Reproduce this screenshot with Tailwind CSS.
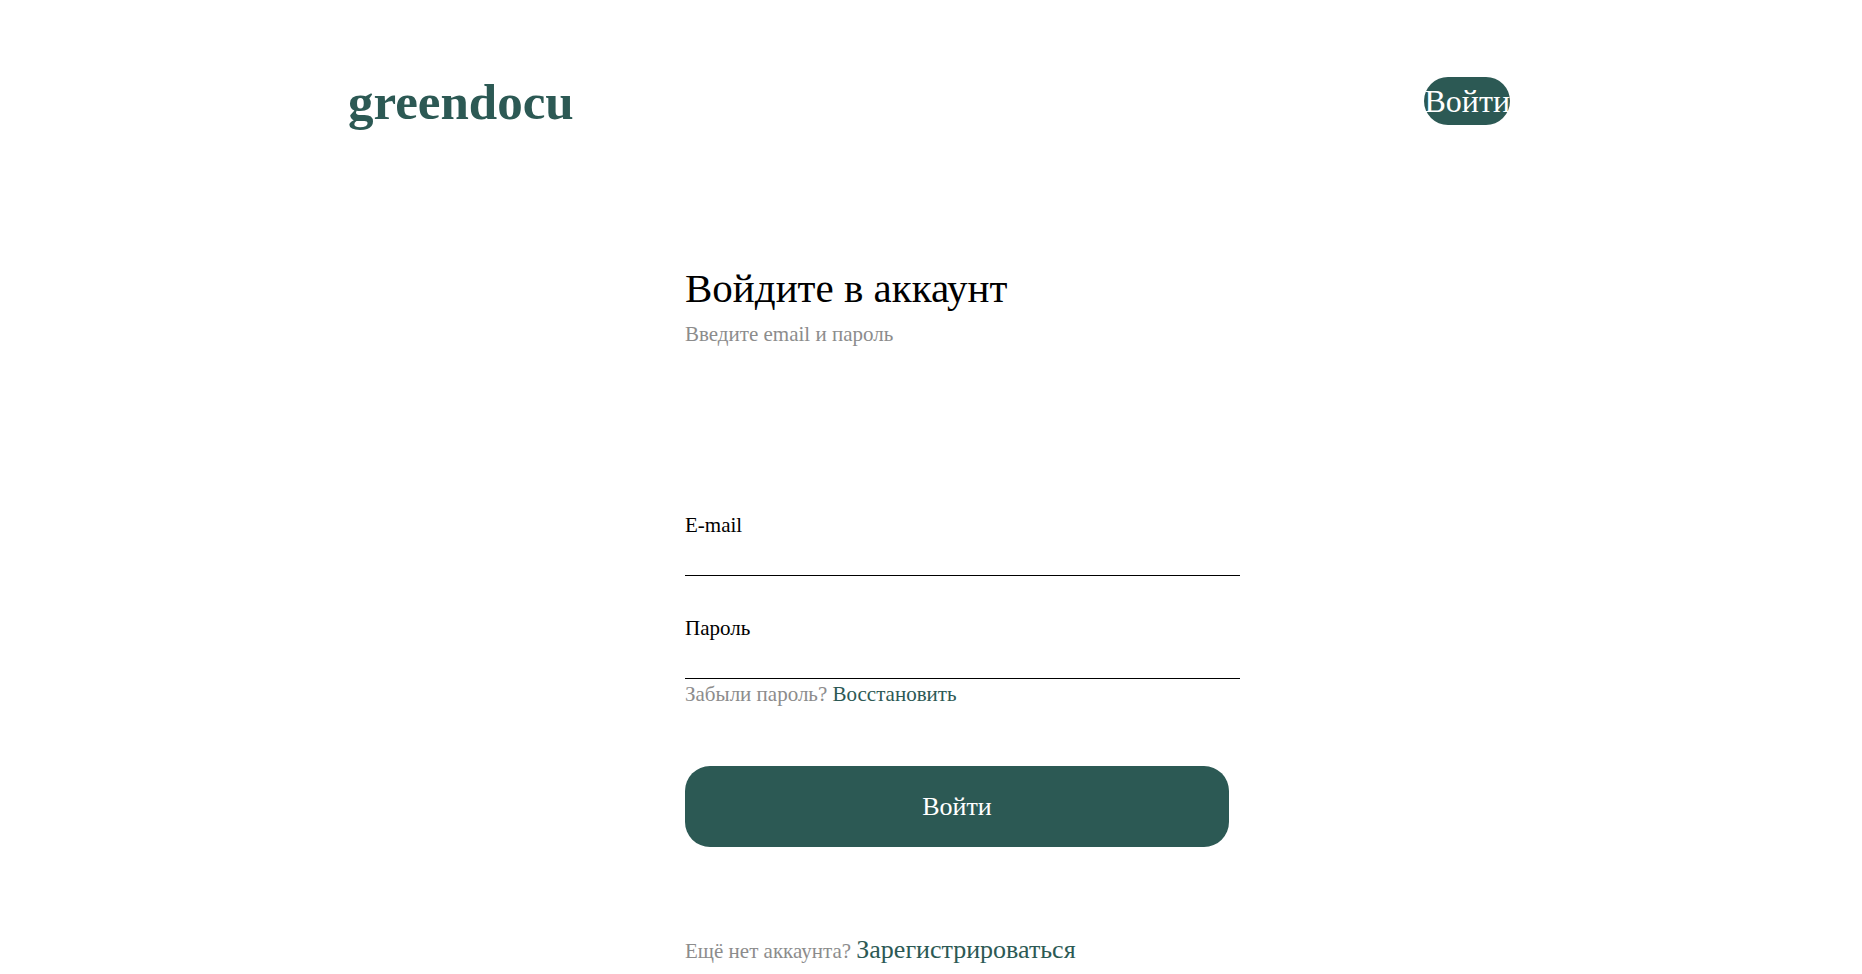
<!DOCTYPE html>
<html lang="ru">
<head>
<meta charset="utf-8">
<meta name="viewport" content="width=device-width, initial-scale=1">
<title>greendocu</title>
<script src="https://cdn.jsdelivr.net/npm/@tailwindcss/browser@4"></script>
</head>
<body class="bg-white text-black font-['Liberation_Serif','Times_New_Roman',serif] text-[21px] leading-6">
<div class="mx-auto max-w-[1166px]">
  <header class="flex items-center justify-between pt-19 pr-1">
    <a href="#" class="pt-0.5 text-[51px] leading-12 font-bold text-[#2c5954]">greendocu</a>
    <button type="button" class="h-12 rounded-3xl bg-[#2c5954] text-[32px] text-white">Войти</button>
  </header>
  <main class="w-full max-w-[555px] pt-[138px] lg:ml-[337px]">
    <h1 class="text-[41px] leading-12">Войдите в аккаунт</h1>
    <p class="mt-2.5 text-[#8c8c8c]">Введите email и пароль</p>
    <form class="mt-[167px]">
      <label for="email" class="block">E-mail</label>
      <input id="email" type="email" class="block h-[39px] w-full border-b border-black outline-none">
      <label for="password" class="mt-10 block">Пароль</label>
      <input id="password" type="password" class="block h-[39px] w-full border-b border-black outline-none">
      <p class="mt-[3px] text-[#8c8c8c]">Забыли пароль? <a href="#" class="text-[#2c5954]">Восстановить</a></p>
      <button type="submit" class="mt-[60px] block h-[81px] w-full max-w-[544px] rounded-[25px] bg-[#2c5954] text-[26px] text-white">Войти</button>
    </form>
    <p class="mt-[91px] text-[#8c8c8c]">Ещё нет аккаунта? <a href="#" class="text-[26px] leading-6 text-[#2c5954]">Зарегистрироваться</a></p>
  </main>
</div>
</body>
</html>
